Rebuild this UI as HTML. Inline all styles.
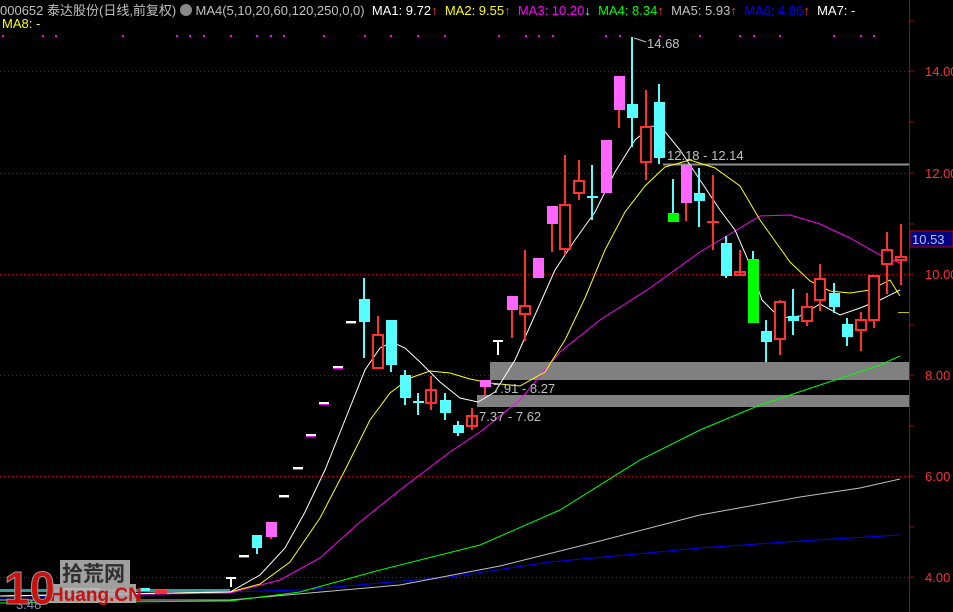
<!DOCTYPE html>
<html><head><meta charset="utf-8"><style>
html,body{margin:0;padding:0;background:#000;width:953px;height:612px;overflow:hidden}
.h{position:absolute;font-family:"Liberation Sans","Noto Sans CJK SC",sans-serif;font-size:13px;white-space:nowrap}
</style></head><body>
<svg width="953" height="612" style="position:absolute;left:0;top:0" xmlns="http://www.w3.org/2000/svg">
<g stroke="#c00000" stroke-dasharray="1 3" stroke-width="1">
<line x1="0" y1="71.5" x2="909" y2="71.5"/><line x1="0" y1="173.5" x2="909" y2="173.5"/><line x1="0" y1="274.5" x2="909" y2="274.5"/><line x1="0" y1="375.5" x2="909" y2="375.5"/><line x1="0" y1="476.5" x2="909" y2="476.5"/><line x1="0" y1="577.5" x2="909" y2="577.5"/>
</g>
<g fill="#ff00ff">
<rect x="2" y="35" width="2" height="2"/><rect x="42" y="35" width="2" height="2"/><rect x="55" y="35" width="2" height="2"/><rect x="122" y="35" width="2" height="2"/><rect x="176" y="35" width="2" height="2"/><rect x="189" y="35" width="2" height="2"/><rect x="203" y="35" width="2" height="2"/><rect x="230" y="35" width="2" height="2"/><rect x="256" y="35" width="2" height="2"/><rect x="270" y="35" width="2" height="2"/><rect x="283" y="35" width="2" height="2"/><rect x="323" y="35" width="2" height="2"/><rect x="364" y="35" width="2" height="2"/><rect x="390" y="35" width="2" height="2"/><rect x="417" y="35" width="2" height="2"/><rect x="444" y="35" width="2" height="2"/><rect x="498" y="35" width="2" height="2"/><rect x="525" y="35" width="2" height="2"/><rect x="538" y="35" width="2" height="2"/><rect x="552" y="35" width="2" height="2"/><rect x="605" y="35" width="2" height="2"/><rect x="619" y="35" width="2" height="2"/><rect x="659" y="35" width="2" height="2"/><rect x="699" y="35" width="2" height="2"/><rect x="739" y="35" width="2" height="2"/><rect x="753" y="35" width="2" height="2"/><rect x="779" y="35" width="2" height="2"/><rect x="833" y="35" width="2" height="2"/><rect x="860" y="35" width="2" height="2"/><rect x="873" y="35" width="2" height="2"/>
</g>
<rect x="490" y="362" width="419" height="18" fill="#808080"/>
<rect x="477" y="395" width="432" height="12" fill="#808080"/>
<line x1="663" y1="164.5" x2="909" y2="164.5" stroke="#909090" stroke-width="2"/>
<line x1="909.5" y1="0" x2="909.5" y2="612" stroke="#b00000"/>
<g stroke="#b00000"><line x1="909" y1="21" x2="914" y2="21"/><line x1="909" y1="71" x2="914" y2="71"/><line x1="909" y1="122" x2="914" y2="122"/><line x1="909" y1="173" x2="914" y2="173"/><line x1="909" y1="224" x2="914" y2="224"/><line x1="909" y1="274" x2="914" y2="274"/><line x1="909" y1="325" x2="914" y2="325"/><line x1="909" y1="375" x2="914" y2="375"/><line x1="909" y1="426" x2="914" y2="426"/><line x1="909" y1="476" x2="914" y2="476"/><line x1="909" y1="527" x2="914" y2="527"/><line x1="909" y1="577" x2="914" y2="577"/></g>
<g fill="#ff3030" font-family="Liberation Sans,sans-serif" font-size="13">
<text x="925" y="76">14.00</text><text x="925" y="178">12.00</text><text x="925" y="279">10.00</text><text x="925" y="380">8.00</text><text x="925" y="481">6.00</text><text x="925" y="582">4.00</text>
</g>
<rect x="910" y="231" width="43" height="16" fill="#000080" stroke="#c00000"/>
<text x="912" y="244" fill="#c0c0ff" font-family="Liberation Sans,sans-serif" font-size="13">10.53</text>
<line x1="898" y1="312.5" x2="909" y2="312.5" stroke="#c0c000"/>
<g fill="none" stroke-width="1">
<polyline stroke="#0000ff" points="0,598 150,594 300,590 450,577 550,562 700,548 800,541 900,535"/>
<polyline stroke="#c0c0c0" points="0,600 230,600 400,585 500,566 600,541 700,515 800,497 860,488 900,479"/>
<polyline stroke="#00ff00" points="0,603 230,601 300,592 380,570 480,545 560,510 640,460 700,430 760,405 820,385 880,365 900,356"/>
<polyline stroke="#ff00ff" points="0,596 230,593 280,580 320,558 360,522 400,490 450,452 480,432 520,400 560,352 600,320 650,288 700,252 740,228 760,216 790,215 820,224 850,238 880,255 900,263"/>
<polyline stroke="#ffff00" points="0,596 230,592 260,584 290,562 320,518 345,470 370,420 390,393 410,378 430,371 450,373 470,379 490,383 520,386 545,372 565,340 585,298 605,250 625,212 645,186 665,167 690,160 715,168 740,186 760,220 790,262 810,281 830,291 850,293 870,290 890,280 900,296"/>
<polyline stroke="#ffffff" points="0,596 230,592 260,575 285,548 305,512 325,470 345,420 365,370 380,348 392,342 405,348 420,362 440,382 460,398 478,402 495,392 515,360 535,315 555,270 575,240 595,212 615,172 635,140 652,126 662,128 680,150 700,180 720,210 735,230 748,260 762,300 780,318 800,316 820,304 840,315 860,308 880,300 900,290"/>
</g>
<g>
<rect x="0" y="589" width="230" height="3" fill="#5fffff" opacity=".6"/>
<rect x="155" y="590" width="12" height="4" fill="#ff3030"/>
<rect x="60" y="588" width="40" height="2" fill="#ffffff"/>
<rect x="140" y="588" width="10" height="3" fill="#55ffff"/>
</g>
<g fill="#ffffff">
<rect x="226" y="577" width="10" height="2"/><rect x="230" y="577" width="2" height="10"/>
<rect x="239" y="555" width="10" height="2"/><rect x="279" y="495" width="10" height="2"/><rect x="293" y="467" width="10" height="2"/><rect x="306" y="434" width="10" height="2"/><rect x="319" y="402" width="10" height="2"/><rect x="333" y="366" width="10" height="2"/><rect x="346" y="321" width="10" height="2"/>
<rect x="493" y="340" width="10" height="2"/><rect x="497" y="340" width="2" height="15"/>
</g>
<g fill="#ff00ff"><rect x="239" y="557" width="10" height="1"/><rect x="279" y="497" width="10" height="1"/><rect x="293" y="469" width="10" height="1"/><rect x="306" y="436" width="10" height="1"/><rect x="319" y="404" width="10" height="1"/><rect x="333" y="368" width="10" height="1"/><rect x="346" y="323" width="10" height="1"/></g>
<g fill="#55ffff" stroke="#55ffff" stroke-width="2">
<line x1="257" y1="548" x2="257" y2="554"/><rect x="252" y="535" width="10" height="13" stroke="none"/>
<line x1="364" y1="278" x2="364" y2="358"/><rect x="359" y="299" width="11" height="23" stroke="none"/>
<line x1="391" y1="320" x2="391" y2="372"/><rect x="386" y="320" width="11" height="45" stroke="none"/>
<line x1="405" y1="370" x2="405" y2="405"/><rect x="400" y="375" width="11" height="23" stroke="none"/>
<line x1="418" y1="393" x2="418" y2="415"/><line x1="413" y1="402" x2="424" y2="402"/>
<line x1="445" y1="393" x2="445" y2="420"/><rect x="440" y="400" width="11" height="13" stroke="none"/>
<line x1="458" y1="421" x2="458" y2="436"/><rect x="453" y="425" width="11" height="8" stroke="none"/>
<line x1="632" y1="37" x2="632" y2="147"/><rect x="627" y="104" width="11" height="14" stroke="none"/>
<line x1="659" y1="84" x2="659" y2="164"/><rect x="654" y="102" width="11" height="56" stroke="none"/>
<line x1="673" y1="179" x2="673" y2="213"/>
<line x1="699" y1="168" x2="699" y2="227"/><rect x="694" y="193" width="11" height="8" stroke="none"/>
<line x1="726" y1="236" x2="726" y2="278"/><rect x="721" y="243" width="11" height="33" stroke="none"/>
<line x1="753" y1="251" x2="753" y2="259"/>
<line x1="766" y1="320" x2="766" y2="362"/><rect x="761" y="331" width="11" height="11" stroke="none"/>
<line x1="793" y1="289" x2="793" y2="335"/><rect x="788" y="316" width="11" height="5" stroke="none"/>
<line x1="834" y1="283" x2="834" y2="313"/><rect x="829" y="293" width="11" height="14" stroke="none"/>
<line x1="847" y1="318" x2="847" y2="346"/><rect x="842" y="324" width="11" height="13" stroke="none"/>
<line x1="592" y1="165" x2="592" y2="220"/><line x1="587" y1="197" x2="598" y2="197"/>
</g>
<rect x="668" y="213" width="11" height="9" fill="#00ff00"/>
<rect x="748" y="259" width="11" height="64" fill="#00ff00"/>
<g fill="#ff66ff" stroke="#ff3030" stroke-width="2">
<line x1="271" y1="535" x2="271" y2="539"/><rect x="266" y="522" width="11" height="15" stroke="none"/>
<line x1="485" y1="387" x2="485" y2="395"/><rect x="480" y="380" width="11" height="7" stroke="none"/>
<line x1="512" y1="300" x2="512" y2="338"/><rect x="507" y="296" width="11" height="14" stroke="none"/>
<line x1="538" y1="258" x2="538" y2="278"/><rect x="533" y="258" width="11" height="20" stroke="none"/>
<line x1="552" y1="206" x2="552" y2="252"/><rect x="547" y="206" width="11" height="18" stroke="none"/>
<line x1="606" y1="140" x2="606" y2="193"/><rect x="601" y="140" width="11" height="53" stroke="none"/>
<line x1="619" y1="76" x2="619" y2="128"/><rect x="614" y="76" width="11" height="34" stroke="none"/>
<line x1="686" y1="165" x2="686" y2="221"/><rect x="681" y="165" width="11" height="38" stroke="none"/>
</g>
<g fill="none" stroke="#ff3030" stroke-width="2">
<line x1="378" y1="316" x2="378" y2="335"/><rect x="373" y="335" width="10" height="33"/>
<line x1="431" y1="376" x2="431" y2="410"/><rect x="426" y="390" width="10" height="13"/>
<line x1="472" y1="408" x2="472" y2="430"/><rect x="467" y="416" width="10" height="10"/>
<line x1="525" y1="250" x2="525" y2="341"/><rect x="520" y="306" width="10" height="8" fill="#000"/>
<line x1="565" y1="155" x2="565" y2="255"/><rect x="560" y="205" width="10" height="44" fill="#000"/>
<line x1="579" y1="160" x2="579" y2="200"/><rect x="574" y="181" width="10" height="12" fill="#000"/>
<line x1="646" y1="90" x2="646" y2="180"/><rect x="641" y="127" width="10" height="35" fill="#000"/>
<line x1="713" y1="175" x2="713" y2="250"/><line x1="707" y1="222" x2="719" y2="222"/>
<line x1="740" y1="250" x2="740" y2="275"/><rect x="735" y="272" width="10" height="3"/>
<line x1="780" y1="300" x2="780" y2="355"/><rect x="775" y="302" width="10" height="37" fill="#000"/>
<line x1="807" y1="293" x2="807" y2="326"/><rect x="802" y="307" width="10" height="14" fill="#000"/>
<line x1="820" y1="264" x2="820" y2="311"/><rect x="815" y="279" width="10" height="21" fill="#000"/>
<line x1="861" y1="312" x2="861" y2="351"/><rect x="856" y="320" width="10" height="10" fill="#000"/>
<line x1="874" y1="276" x2="874" y2="328"/><rect x="869" y="276" width="10" height="44" fill="#000"/>
<line x1="887" y1="232" x2="887" y2="294"/><rect x="882" y="250" width="10" height="14" fill="#000"/>
<line x1="901" y1="224" x2="901" y2="285"/><rect x="896" y="257" width="10" height="3" fill="#000"/>
</g>
<g fill="#c0c0c0" font-family="Liberation Sans,sans-serif" font-size="13">
<text x="647" y="48">14.68</text>
<text x="667" y="160">12.18 - 12.14</text>
<text x="493" y="393">7.91 - 8.27</text>
<text x="479" y="421">7.37 - 7.62</text>
<text x="16" y="609" fill="#9090c0">3.48</text>
</g>
<path d="M634 38 L646 42" stroke="#c0c0c0" fill="none"/>
<rect x="60" y="560" width="70" height="24" fill="#a0a0a0"/>
<text x="62" y="581" fill="#303030" font-family="Noto Sans CJK SC,sans-serif" font-size="21" font-weight="bold">拾荒网</text>
<rect x="48" y="584" width="88" height="19" fill="#b0b0b0" opacity=".9"/>
<text x="50" y="601" fill="#cc1010" font-family="Liberation Sans,sans-serif" font-size="19" font-weight="bold">Huang.CN</text>
<text x="4" y="604" fill="#cc1010" stroke="#999" stroke-width="1" font-family="Liberation Sans,sans-serif" font-size="46" font-weight="bold">10</text>
</svg>
<div class="h" style="left:0;top:0;color:#c0c0c0">000652 泰达股份(日线,前复权) <span style="display:inline-block;width:12px;height:12px;border-radius:6px;background:#888;vertical-align:-1px"></span> MA4(5,10,20,60,120,250,0,0) &nbsp;<span style="color:#fff">MA1: 9.72</span><span style="color:#f33">↑</span> &nbsp;<span style="color:#ff0">MA2: 9.55</span><span style="color:#f33">↑</span> &nbsp;<span style="color:#f0f">MA3: 10.20</span><span style="color:#5ff">↓</span> &nbsp;<span style="color:#0f0">MA4: 8.34</span><span style="color:#f33">↑</span> &nbsp;<span style="color:#c0c0c0">MA5: 5.93</span><span style="color:#f33">↑</span> &nbsp;<span style="color:#00f">MA6: 4.86</span><span style="color:#f33">↑</span> &nbsp;<span style="color:#fff">MA7: -</span></div>
<div class="h" style="left:2px;top:16px;color:#ff0">MA8: -</div>
</body></html>
